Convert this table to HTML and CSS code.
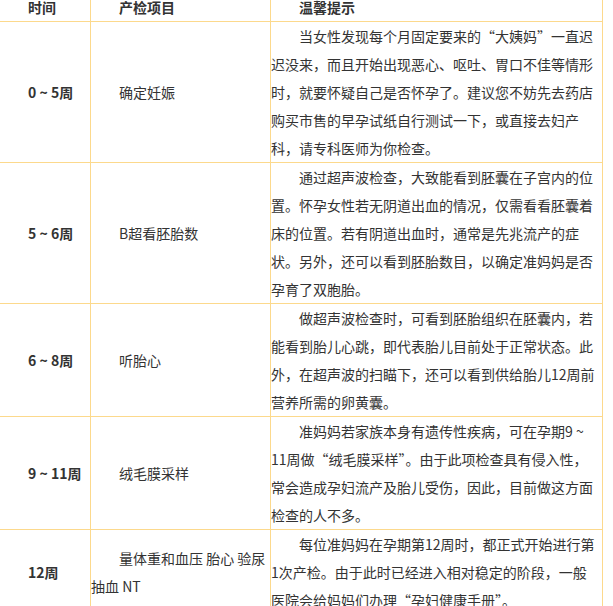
FILE: index.html
```html
<!DOCTYPE html>
<html lang="zh-CN">
<head>
<meta charset="utf-8">
<title>产检时间表</title>
<link rel="stylesheet" href="styles.css">
</head>
<body>
<table class="exam-table">
  <colgroup>
    <col class="col-time">
    <col class="col-item">
    <col class="col-tip">
  </colgroup>
  <thead>
    <tr>
      <th class="cell cell-time">时间</th>
      <th class="cell cell-item">产检项目</th>
      <th class="cell cell-tip">温馨提示</th>
    </tr>
  </thead>
  <tbody>
    <tr>
      <td class="cell cell-time">0 ~ 5周</td>
      <td class="cell cell-item">确定妊娠</td>
      <td class="cell cell-tip">当女性发现每个月固定要来的“大姨妈”一直迟迟没来，而且开始出现恶心、呕吐、胃口不佳等情形时，就要怀疑自己是否怀孕了。建议您不妨先去药店购买市售的早孕试纸自行测试一下，或直接去妇产科，请专科医师为你检查。</td>
    </tr>
    <tr>
      <td class="cell cell-time">5 ~ 6周</td>
      <td class="cell cell-item">B超看胚胎数</td>
      <td class="cell cell-tip">通过超声波检查，大致能看到胚囊在子宫内的位置。怀孕女性若无阴道出血的情况，仅需看看胚囊着床的位置。若有阴道出血时，通常是先兆流产的症状。另外，还可以看到胚胎数目，以确定准妈妈是否孕育了双胞胎。</td>
    </tr>
    <tr>
      <td class="cell cell-time">6 ~ 8周</td>
      <td class="cell cell-item">听胎心</td>
      <td class="cell cell-tip">做超声波检查时，可看到胚胎组织在胚囊内，若能看到胎儿心跳，即代表胎儿目前处于正常状态。此外，在超声波的扫瞄下，还可以看到供给胎儿12周前营养所需的卵黄囊。</td>
    </tr>
    <tr>
      <td class="cell cell-time">9 ~ 11周</td>
      <td class="cell cell-item">绒毛膜采样</td>
      <td class="cell cell-tip">准妈妈若家族本身有遗传性疾病，可在孕期9 ~ 11周做“绒毛膜采样”。由于此项检查具有侵入性，常会造成孕妇流产及胎儿受伤，因此，目前做这方面检查的人不多。</td>
    </tr>
    <tr>
      <td class="cell cell-time">12周</td>
      <td class="cell cell-item">量体重和血压 胎心 验尿 抽血 NT</td>
      <td class="cell cell-tip">每位准妈妈在孕期第12周时，都正式开始进行第1次产检。由于此时已经进入相对稳定的阶段，一般医院会给妈妈们办理“孕妇健康手册”。</td>
    </tr>
  </tbody>
</table>
</body>
</html>
```

FILE: styles.css
```css
html, body {
  margin: 0;
  padding: 0;
  background: #ffffff;
}

body {
  font-family: "Noto Sans CJK SC", "Microsoft YaHei", sans-serif;
  font-size: 14px;
  line-height: 28px;
  color: #333333;
  overflow: hidden;
}

.exam-table {
  border-collapse: separate;
  border-spacing: 0;
  table-layout: fixed;
  width: 604px;
  margin: -7px 0 0 -1px;
}

.col-time { width: 92px; }
.col-item { width: 180px; }
.col-tip { width: 332px; }

.cell {
  padding: 0;
  text-indent: 2em;
  text-align: left;
  border-right: 1px solid #fcd98c;
  border-bottom: 1px solid #fcd98c;
  vertical-align: middle;
  word-wrap: break-word;
}

th.cell {
  font-weight: bold;
  color: #333333;
}

.cell-time {
  border-left: 1px solid #fcd98c;
  font-weight: bold;
}

.cell-tip {
  vertical-align: top;
  padding-right: 3px;
}
```
